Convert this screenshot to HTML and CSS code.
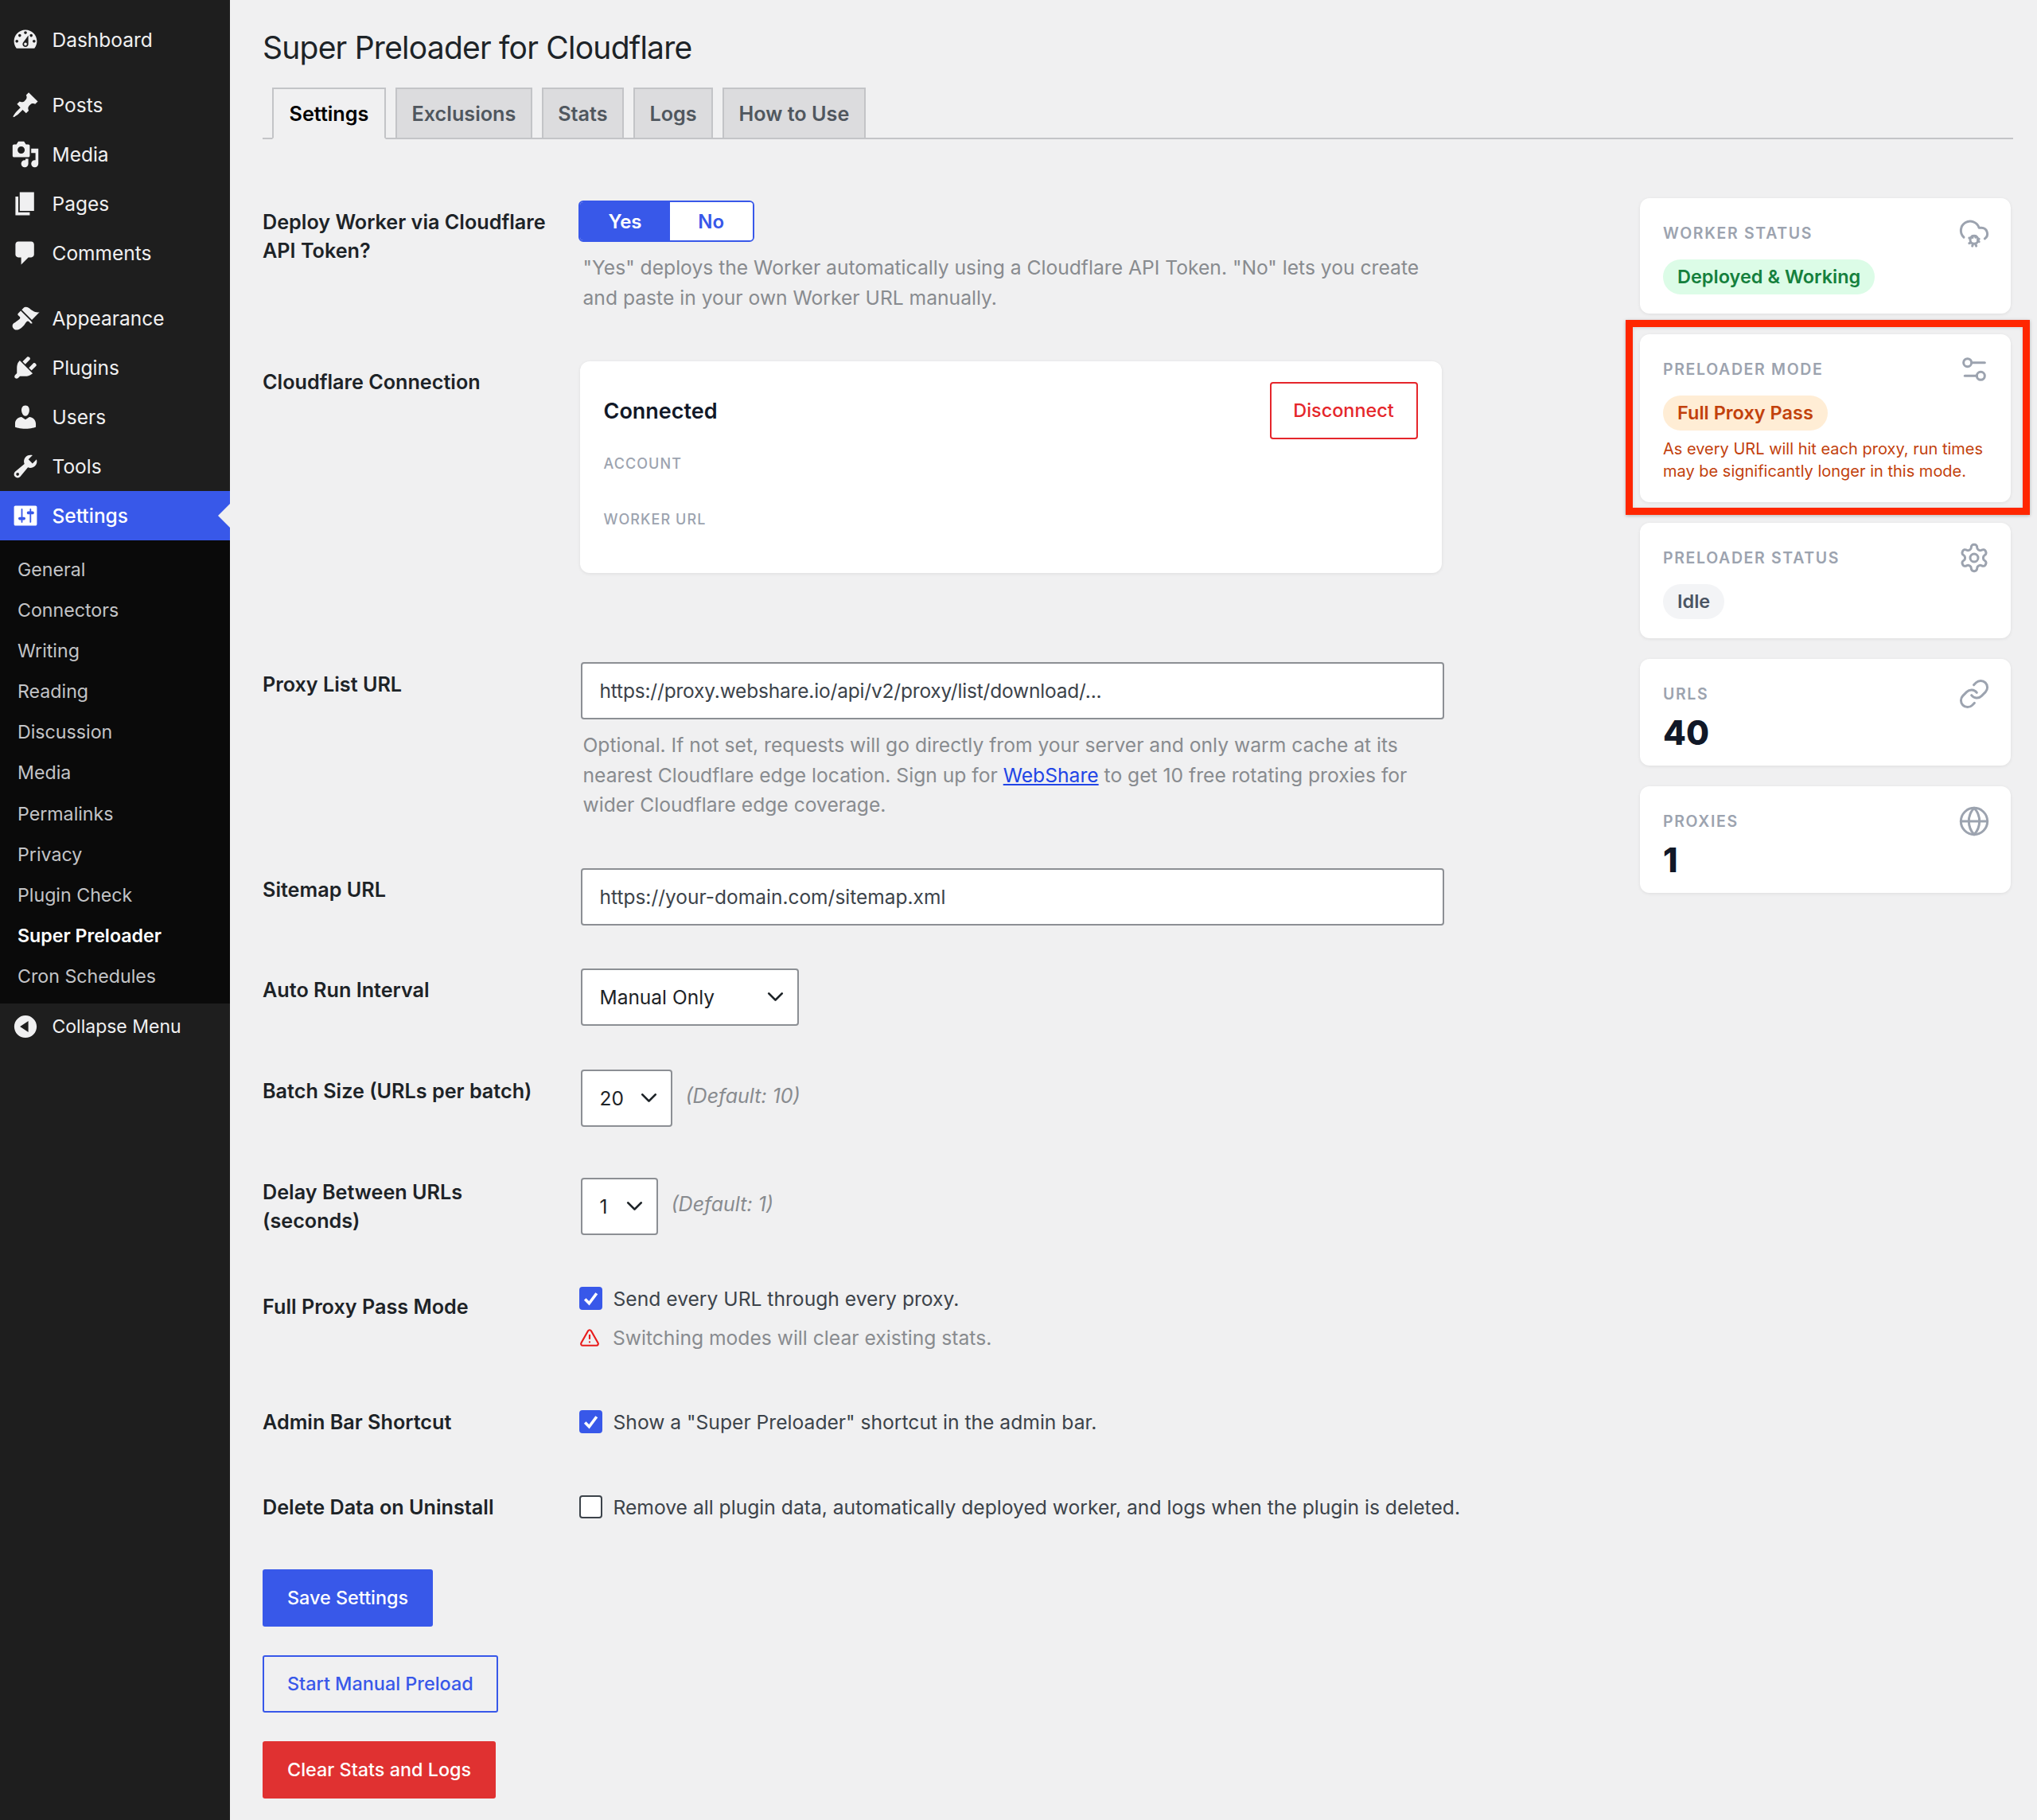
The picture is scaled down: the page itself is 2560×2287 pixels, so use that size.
FILE: index.html
```html
<!DOCTYPE html>
<html lang="en">
<head>
  <meta charset="UTF-8">
  <title>Super Preloader for Cloudflare</title>
  <link rel="stylesheet" href="styles.css">
</head>
<body>
  <div class="admin-menu">
    <ul class="menu-group">
      <li class="menu-item"><svg class="menu-icon" viewBox="0 0 20 20"><path fill-rule="evenodd" d="M3.76 16h12.48c1.1-1.37 1.76-3.11 1.76-5 0-4.42-3.58-8-8-8s-8 3.58-8 8c0 1.89.66 3.63 1.76 5zM10 4c.55 0 1 .45 1 1s-.45 1-1 1-1-.45-1-1 .45-1 1-1zM6 6c.55 0 1 .45 1 1s-.45 1-1 1-1-.45-1-1 .45-1 1-1zm8 0c.55 0 1 .45 1 1s-.45 1-1 1-1-.45-1-1 .45-1 1-1zm-5.37 5.55L12 7v6c0 1.1-.9 2-2 2s-2-.9-2-2c0-.57.24-1.08.63-1.45zM4 10c.55 0 1 .45 1 1s-.45 1-1 1-1-.45-1-1 .45-1 1-1zm12 0c.55 0 1 .45 1 1s-.45 1-1 1-1-.45-1-1 .45-1 1-1zm-5 3c0-.55-.45-1-1-1s-1 .45-1 1 .45 1 1 1 1-.45 1-1z"/></svg>Dashboard</li>
    </ul>
    <ul class="menu-group">
      <li class="menu-item"><svg class="menu-icon" viewBox="0 0 20 20"><path d="M10.44 3.02l1.82-1.82 6.36 6.35-1.83 1.82c-1.05-.68-2.48-.57-3.41.36l-.75.75c-.92.93-1.04 2.35-.35 3.41l-1.83 1.82-2.41-2.41-2.8 2.79c-.42.42-3.38 2.71-3.8 2.29s1.86-3.39 2.28-3.81l2.79-2.79L4.1 9.36l1.83-1.82c1.05.69 2.48.57 3.4-.36l.75-.75c.93-.92 1.05-2.35.36-3.41z"/></svg>Posts</li>
      <li class="menu-item"><svg class="menu-icon" viewBox="0 0 20 20"><path fill-rule="evenodd" d="M13 11V4c0-.55-.45-1-1-1h-1.67L9 1H5L3.67 3H2c-.55 0-1 .45-1 1v7c0 .55.45 1 1 1h10c.55 0 1-.45 1-1zM7 4.5c1.38 0 2.5 1.12 2.5 2.5S8.38 9.5 7 9.5 4.5 8.38 4.5 7 5.62 4.5 7 4.5zM14 6h5v10.5c0 1.38-1.12 2.5-2.5 2.5S14 17.88 14 16.5s1.12-2.5 2.5-2.5c.17 0 .34.02.5.05V9h-3V6zm-4 8.05V13h2v3.5c0 1.38-1.12 2.5-2.5 2.5S7 17.88 7 16.5 8.12 14 9.5 14c.17 0 .34.02.5.05z"/></svg>Media</li>
      <li class="menu-item"><svg class="menu-icon" viewBox="0 0 20 20"><path d="M6 15V2h10v13H6zm-1 1h8v2H3V5h2v11z"/></svg>Pages</li>
      <li class="menu-item"><svg class="menu-icon" viewBox="0 0 20 20"><path d="M5 2h9c1.1 0 2 .9 2 2v7c0 1.1-.9 2-2 2h-2l-5 5v-5H5c-1.1 0-2-.9-2-2V4c0-1.1.9-2 2-2z"/></svg>Comments</li>
    </ul>
    <ul class="menu-group">
      <li class="menu-item"><svg class="menu-icon" viewBox="0 0 20 20"><path d="M14.48 11.06L7.41 3.99l1.5-1.5c.5-.56 2.3-.47 3.51.32 1.21.8 1.43 1.28 2.91 2.1 1.18.64 2.45 1.26 4.45.85zm-.71.71L6.7 4.7 4.93 6.47c-.39.39-.39 1.02 0 1.41l1.06 1.06c.39.39.39 1.03 0 1.42-.6.6-1.43 1.11-2.21 1.69-.35.26-.7.53-1.01.84C1.43 13.23.76 14.4.93 15.7c.09.67.53 1.37 1.27 1.93.94.71 1.94.54 3.21.08 1.27-.47 2.4-1.62 3.02-2.25.33-.33.61-.68.87-1.02.54-.78 1.05-1.57 1.65-2.17.39-.39 1.03-.39 1.42 0l1.05 1.06c.39.39 1.03.39 1.42 0z"/></svg>Appearance</li>
      <li class="menu-item"><svg class="menu-icon" viewBox="0 0 20 20"><path d="M13.11 4.36L9.87 7.6 8 5.73l3.24-3.24c.35-.34 1.05-.2 1.56.32.52.51.66 1.21.31 1.55zm-8 1.77l.91-1.12 9.01 9.01-1.19.84c-.71.71-2.63 1.16-3.82 1.16H6.14L4.9 17.26c-.59.59-1.54.59-2.12 0-.59-.58-.59-1.53 0-2.12l1.24-1.24v-3.88c0-1.13.4-3.19 1.09-3.89zm7.26 3.97l3.24-3.24c.34-.35 1.04-.21 1.55.31.52.51.66 1.21.31 1.55l-3.24 3.25z"/></svg>Plugins</li>
      <li class="menu-item"><svg class="menu-icon" viewBox="0 0 20 20"><path d="M10 9.25c-2.27 0-2.73-3.44-2.73-3.44C7 4.02 7.82 2 9.97 2c2.16 0 2.98 2.02 2.71 3.81 0 0-.41 3.44-2.68 3.44zm0 2.57L12.72 10c2.39 0 4.52 2.33 4.52 4.53v2.49s-3.65 1.13-7.24 1.13c-3.65 0-7.24-1.13-7.24-1.13v-2.49c0-2.25 1.94-4.48 4.47-4.48z"/></svg>Users</li>
      <li class="menu-item"><svg class="menu-icon" viewBox="0 0 20 20"><path fill-rule="evenodd" d="M16.68 9.77c-1.34 1.34-3.3 1.67-4.95.99l-5.41 6.52c-.99.99-2.59.99-3.58 0s-.99-2.59 0-3.57l6.52-5.42c-.68-1.65-.35-3.61.99-4.95 1.28-1.28 3.12-1.62 4.72-1.06l-2.89 2.89 2.82 2.82 2.86-2.87c.53 1.58.18 3.39-1.08 4.65zM3.81 16.21c.4.39 1.04.39 1.43 0 .4-.4.4-1.04 0-1.43-.39-.4-1.03-.4-1.43 0-.39.39-.39 1.03 0 1.43z"/></svg>Tools</li>
      <li class="menu-item current"><svg class="menu-icon" viewBox="0 0 20 20"><path fill-rule="evenodd" d="M18 16V4c0-.55-.45-1-1-1H3c-.55 0-1 .45-1 1v12c0 .55.45 1 1 1h14c.55 0 1-.45 1-1zM8 11h1c.55 0 1 .45 1 1s-.45 1-1 1H8v1.5c0 .28-.22.5-.5.5s-.5-.22-.5-.5V13H6c-.55 0-1-.45-1-1s.45-1 1-1h1V5.5c0-.28.22-.5.5-.5s.5.22.5.5V11zm5-2h-1c-.55 0-1-.45-1-1s.45-1 1-1h1V5.5c0-.28.22-.5.5-.5s.5.22.5.5V7h1c.55 0 1 .45 1 1s-.45 1-1 1h-1v5.5c0 .28-.22.5-.5.5s-.5-.22-.5-.5V9z"/></svg>Settings</li>
    </ul>
    <ul class="submenu">
      <li>General</li>
      <li>Connectors</li>
      <li>Writing</li>
      <li>Reading</li>
      <li>Discussion</li>
      <li>Media</li>
      <li>Permalinks</li>
      <li>Privacy</li>
      <li>Plugin Check</li>
      <li class="active">Super Preloader</li>
      <li>Cron Schedules</li>
    </ul>
    <div class="menu-item collapse"><svg class="menu-icon" viewBox="0 0 20 20"><path fill-rule="evenodd" d="M10 2.16c4.33 0 7.84 3.51 7.84 7.84s-3.51 7.84-7.84 7.84S2.16 14.33 2.16 10 5.71 2.16 10 2.16zm2 11.72V6.12L6.18 9.97z"/></svg>Collapse Menu</div>
  </div>

  <div class="wrap">
    <h1 class="page-title">Super Preloader for Cloudflare</h1>
    <div class="tabs">
      <a class="tab active">Settings</a>
      <a class="tab">Exclusions</a>
      <a class="tab">Stats</a>
      <a class="tab">Logs</a>
      <a class="tab">How to Use</a>
    </div>

    <div class="columns">
      <div class="settings">
        <div class="form-row row-deploy">
          <div class="row-label label-deploy">Deploy Worker via Cloudflare API Token?</div>
          <div>
            <div class="toggle"><span class="toggle-yes">Yes</span><span class="toggle-no">No</span></div>
            <p class="hint hint-toggle">"Yes" deploys the Worker automatically using a Cloudflare API Token. "No" lets you create<br>and paste in your own Worker URL manually.</p>
          </div>
        </div>

        <div class="form-row row-connection">
          <div class="row-label label-card">Cloudflare Connection</div>
          <div class="connection-card">
            <div class="connection-main">
              <div class="connection-title">Connected</div>
              <div class="connection-field">ACCOUNT</div>
              <div class="connection-field">WORKER URL</div>
            </div>
            <a class="btn-disconnect">Disconnect</a>
          </div>
        </div>

        <div class="form-row row-proxy">
          <div class="row-label label-input">Proxy List URL</div>
          <div>
            <input class="text-input input-proxy" type="text" value="https://proxy.webshare.io/api/v2/proxy/list/download/...">
            <p class="hint hint-input">Optional. If not set, requests will go directly from your server and only warm cache at its<br>nearest Cloudflare edge location. Sign up for <a class="link">WebShare</a> to get 10 free rotating proxies for<br>wider Cloudflare edge coverage.</p>
          </div>
        </div>

        <div class="form-row row-sitemap">
          <div class="row-label label-input">Sitemap URL</div>
          <input class="text-input" type="text" value="https://your-domain.com/sitemap.xml">
        </div>

        <div class="form-row row-interval">
          <div class="row-label label-input">Auto Run Interval</div>
          <div class="select select-interval">Manual Only<svg class="chevron" viewBox="0 0 24 24"><path d="m6 9 6 6 6-6"/></svg></div>
        </div>

        <div class="form-row row-batch">
          <div class="row-label label-input">Batch Size (URLs per batch)</div>
          <div class="inline-field">
            <div class="select select-batch">20<svg class="chevron" viewBox="0 0 24 24"><path d="m6 9 6 6 6-6"/></svg></div>
            <em class="default-note">(Default: 10)</em>
          </div>
        </div>

        <div class="form-row row-delay">
          <div class="row-label label-delay">Delay Between URLs (seconds)</div>
          <div class="inline-field">
            <div class="select select-delay">1<svg class="chevron" viewBox="0 0 24 24"><path d="m6 9 6 6 6-6"/></svg></div>
            <em class="default-note">(Default: 1)</em>
          </div>
        </div>

        <div class="form-row row-fullpass">
          <div class="row-label label-check">Full Proxy Pass Mode</div>
          <div>
            <label class="check-line"><span class="checkbox checked"><svg viewBox="0 0 24 24"><path d="m5 13 5 5 9-12"/></svg></span>Send every URL through every proxy.</label>
            <div class="warn-line"><svg class="warn-icon" viewBox="0 0 24 24"><path d="m21.73 18-8-14a2 2 0 0 0-3.48 0l-8 14A2 2 0 0 0 4 21h16a2 2 0 0 0 1.73-3"/><path d="M12 9v4"/><path d="M12 17h.01"/></svg>Switching modes will clear existing stats.</div>
          </div>
        </div>

        <div class="form-row row-adminbar">
          <div class="row-label label-plain">Admin Bar Shortcut</div>
          <label class="check-line"><span class="checkbox checked"><svg viewBox="0 0 24 24"><path d="m5 13 5 5 9-12"/></svg></span>Show a "Super Preloader" shortcut in the admin bar.</label>
        </div>

        <div class="form-row row-uninstall">
          <div class="row-label label-plain">Delete Data on Uninstall</div>
          <label class="check-line nowrap"><span class="checkbox"></span>Remove all plugin data, automatically deployed worker, and logs when the plugin is deleted.</label>
        </div>

        <div class="actions">
          <a class="btn btn-primary">Save Settings</a>
          <a class="btn btn-outline">Start Manual Preload</a>
          <a class="btn btn-danger">Clear Stats and Logs</a>
        </div>
      </div>

      <aside class="status-cards">
        <div class="stat-card">
          <div class="stat-head">
            <span class="stat-label">WORKER STATUS</span>
            <svg class="stat-icon" viewBox="0 0 24 24"><path d="M4.2 15.1A7 7 0 1 1 15.71 8h1.79a4.5 4.5 0 0 1 2.5 8.2"/><circle cx="12" cy="17" r="3"/><path d="m15.7 18.4-.9-.3"/><path d="m9.2 15.9-.9-.3"/><path d="m10.6 21.7.3-.9"/><path d="m13.1 15.2.3-.9"/><path d="m13.6 21.7-.4-1"/><path d="m10.8 15.3-.4-1"/><path d="m8.3 19.6 1-.4"/><path d="m14.7 16.8 1-.4"/></svg>
          </div>
          <span class="badge badge-green">Deployed &amp; Working</span>
        </div>

        <div class="stat-card highlighted">
          <div class="highlight-box"></div>
          <div class="stat-head">
            <span class="stat-label">PRELOADER MODE</span>
            <svg class="stat-icon" viewBox="0 0 24 24"><path d="M20 7h-9"/><path d="M14 17H5"/><circle cx="17" cy="17" r="3"/><circle cx="7" cy="7" r="3"/></svg>
          </div>
          <span class="badge badge-orange">Full Proxy Pass</span>
          <p class="stat-note">As every URL will hit each proxy, run times may be significantly longer in this mode.</p>
        </div>

        <div class="stat-card">
          <div class="stat-head">
            <span class="stat-label">PRELOADER STATUS</span>
            <svg class="stat-icon" viewBox="0 0 24 24"><path d="M12.22 2h-.44a2 2 0 0 0-2 2v.18a2 2 0 0 1-1 1.73l-.43.25a2 2 0 0 1-2 0l-.15-.08a2 2 0 0 0-2.73.73l-.22.38a2 2 0 0 0 .73 2.73l.15.1a2 2 0 0 1 1 1.72v.51a2 2 0 0 1-1 1.74l-.15.09a2 2 0 0 0-.73 2.73l.22.38a2 2 0 0 0 2.73.73l.15-.08a2 2 0 0 1 2 0l.43.25a2 2 0 0 1 1 1.73V20a2 2 0 0 0 2 2h.44a2 2 0 0 0 2-2v-.18a2 2 0 0 1 1-1.73l.43-.25a2 2 0 0 1 2 0l.15.08a2 2 0 0 0 2.73-.73l.22-.39a2 2 0 0 0-.73-2.73l-.15-.08a2 2 0 0 1-1-1.74v-.5a2 2 0 0 1 1-1.74l.15-.09a2 2 0 0 0 .73-2.73l-.22-.38a2 2 0 0 0-2.73-.73l-.15.08a2 2 0 0 1-2 0l-.43-.25a2 2 0 0 1-1-1.73V4a2 2 0 0 0-2-2z"/><circle cx="12" cy="12" r="3"/></svg>
          </div>
          <span class="badge badge-gray">Idle</span>
        </div>

        <div class="stat-card">
          <div class="stat-head">
            <span class="stat-label">URLS</span>
            <svg class="stat-icon" viewBox="0 0 24 24"><path d="M10 13a5 5 0 0 0 7.54.54l3-3a5 5 0 0 0-7.07-7.07l-1.72 1.71"/><path d="M14 11a5 5 0 0 0-7.54-.54l-3 3a5 5 0 0 0 7.07 7.07l1.71-1.71"/></svg>
          </div>
          <div class="stat-number">40</div>
        </div>

        <div class="stat-card">
          <div class="stat-head">
            <span class="stat-label">PROXIES</span>
            <svg class="stat-icon" viewBox="0 0 24 24"><circle cx="12" cy="12" r="10"/><path d="M12 2a14.5 14.5 0 0 0 0 20 14.5 14.5 0 0 0 0-20"/><path d="M2 12h20"/></svg>
          </div>
          <div class="stat-number">1</div>
        </div>
      </aside>
    </div>
  </div>
</body>
</html>
```

FILE: styles.css
```css
* {
  box-sizing: border-box;
}

html, body {
  margin: 0;
  padding: 0;
}

body {
  display: flex;
  min-height: 2287px;
  font-family: "Inter", "Liberation Sans", sans-serif;
  background-color: #f0f0f1;
  color: #1d2327;
}

/* admin menu */
.admin-menu {
  width: 289px;
  flex-shrink: 0;
  padding-top: 19px;
  background-color: #1e1e1e;
  color: #f0f0f1;
}

.menu-group {
  list-style: none;
  margin: 0 0 20px;
  padding: 0;
}

.menu-group:nth-child(3) {
  margin-bottom: 0;
}

.menu-item {
  position: relative;
  display: flex;
  align-items: center;
  gap: 15.5px;
  height: 62px;
  padding-left: 14px;
  font-size: 24.5px;
}

.menu-icon {
  width: 36px;
  height: 36px;
  fill: #f0f0f1;
}

.menu-item.current {
  background-color: #3858e9;
  color: #fff;
  font-weight: 500;
}

.menu-item.current .menu-icon {
  fill: #fff;
}

.menu-item.current::after {
  content: "";
  position: absolute;
  right: 0;
  top: 50%;
  margin-top: -15px;
  border: 15px solid transparent;
  border-right-color: #f0f0f1;
  border-left-width: 0;
}

.submenu {
  list-style: none;
  margin: 0;
  padding: 11.5px 0 7.5px;
  background-color: #0a0a0a;
  color: #c3c4c7;
  font-size: 23.2px;
}

.submenu li {
  height: 51.2px;
  line-height: 51.2px;
  padding-left: 22px;
}

.submenu .active {
  color: #fff;
  font-weight: 600;
}

.collapse {
  height: 58px;
  font-size: 23px;
}

/* page header */
.wrap {
  flex: 1;
  min-width: 0;
  padding: 0 30px 0 41px;
}

.page-title {
  margin: 0;
  padding-top: 34px;
  height: 110px;
  font-size: 39px;
  letter-spacing: -0.77px;
  line-height: 52px;
  font-weight: 400;
  color: #1d2327;
}

.tabs {
  display: flex;
  gap: 12.5px;
  height: 65px;
  padding-left: 12px;
  border-bottom: 2px solid #c3c4c7;
}

.tab {
  height: 65px;
  padding: 0 18.2px;
  line-height: 62px;
  font-size: 25.2px;
  font-weight: 600;
  color: #50575e;
  background-color: #dcdcde;
  border: 2px solid #c3c4c7;
}

.tab.active {
  padding: 0 19.5px;
  color: #000;
  background-color: #f0f0f1;
  border-bottom-color: #f0f0f1;
}

/* layout of the settings form and the status column */
.columns {
  display: flex;
  justify-content: space-between;
  padding-top: 77px;
}

.settings {
  width: 1500px;
}

.form-row {
  display: grid;
  grid-template-columns: 399.5px 1085px;
}

.row-label {
  font-size: 25.2px;
  font-weight: 600;
  line-height: 36px;
  color: #1d2327;
  padding-right: 30px;
}

.label-deploy {
  padding-top: 9px;
}

.label-card {
  padding-top: 8px;
}

.label-input {
  padding-top: 9.5px;
}

.label-delay {
  padding-top: 0;
}

.label-check {
  padding-top: 7px;
}

.label-plain {
  padding-top: 0;
}

.row-deploy {
  margin-bottom: 61px;
}

.row-connection {
  margin-bottom: 112px;
}

.row-proxy {
  margin-bottom: 60px;
}

.row-sitemap {
  margin-bottom: 54px;
}

.row-interval {
  margin-bottom: 55px;
}

.row-batch {
  margin-bottom: 64px;
}

.row-delay {
  margin-bottom: 65px;
}

.row-fullpass {
  margin-bottom: 72.5px;
}

.row-adminbar {
  margin-bottom: 71px;
}

.row-uninstall {
  margin-bottom: 60px;
}

/* yes / no toggle */
.toggle {
  display: inline-flex;
  height: 52px;
  margin-left: -2.5px;
  border: 2px solid #3858e9;
  border-radius: 6px;
  overflow: hidden;
  font-size: 24px;
  font-weight: 600;
  line-height: 49.5px;
  text-align: center;
}

.toggle-yes {
  width: 113px;
  background-color: #3858e9;
  color: #fff;
}

.toggle-no {
  width: 103.5px;
  background-color: #fff;
  color: #3858e9;
}

.hint {
  margin: 0;
  padding-left: 3px;
  font-size: 24.65px;
  line-height: 37.5px;
  color: #888b8f;
}

.hint-toggle {
  margin-top: 14px;
}

.hint-input {
  margin-top: 14px;
}

.link {
  color: #2145e6;
  text-decoration: underline;
}

/* cloudflare connection card */
.connection-card {
  display: flex;
  justify-content: space-between;
  align-items: flex-start;
  width: 1083px;
  height: 266px;
  margin-left: -1px;
  padding: 26px 30px;
  background-color: #fff;
  border-radius: 12px;
  box-shadow: 0 1px 4px rgba(0, 0, 0, 0.08);
}

.connection-main {
  padding-top: 15px;
}

.connection-title {
  font-size: 27px;
  font-weight: 600;
  line-height: 44px;
  margin-bottom: 33px;
  color: #111827;
}

.connection-field {
  height: 70px;
  font-size: 18px;
  font-weight: 500;
  letter-spacing: 0.06em;
  color: #9ca3af;
}

.btn-disconnect {
  width: 186px;
  height: 72px;
  line-height: 68px;
  text-align: center;
  font-size: 23.4px;
  font-weight: 500;
  color: #e5262b;
  border: 2px solid #e5262b;
  border-radius: 4px;
}

/* inputs and selects */
.text-input {
  display: block;
  width: 1085px;
  height: 72px;
  padding: 0 22px;
  font-family: inherit;
  font-size: 24.5px;
  color: #3c434a;
  background-color: #fff;
  border: 2px solid #8c8f94;
  border-radius: 4px;
}

.input-proxy {
  letter-spacing: -0.18px;
}

.select {
  display: flex;
  align-items: center;
  justify-content: space-between;
  height: 72px;
  padding: 0 11px 0 22px;
  font-size: 24.5px;
  color: #1d2327;
  background-color: #fff;
  border: 2px solid #8c8f94;
  border-radius: 4px;
}

.select-interval {
  width: 274px;
}

.select-batch {
  width: 115px;
}

.select-delay {
  width: 97px;
}

.chevron {
  width: 33px;
  height: 33px;
  flex-shrink: 0;
  fill: none;
  stroke: #1d2327;
  stroke-width: 2;
  stroke-linecap: round;
  stroke-linejoin: round;
}

.inline-field {
  display: flex;
  align-items: center;
  gap: 17px;
}

.default-note {
  font-size: 25px;
  color: #888b8f;
  margin-top: -6px;
}

/* checkboxes */
.check-line {
  display: flex;
  align-items: center;
  gap: 14px;
  font-size: 24.65px;
  line-height: 30px;
  color: #3c434a;
  margin-left: -2px;
}

.nowrap {
  white-space: nowrap;
}

.checkbox {
  width: 29px;
  height: 29px;
  flex-shrink: 0;
  background-color: #fff;
  border: 2px solid #3c434a;
  border-radius: 4px;
}

.checkbox.checked {
  background-color: #3858e9;
  border-color: #3858e9;
}

.checkbox svg {
  display: block;
  width: 25px;
  height: 25px;
  fill: none;
  stroke: #fff;
  stroke-width: 3.5;
}

.warn-line {
  display: flex;
  align-items: center;
  gap: 16px;
  margin-top: 19.5px;
  margin-left: -1.5px;
  font-size: 24.65px;
  line-height: 30px;
  color: #888b8f;
}

.warn-icon {
  width: 26px;
  height: 26px;
  flex-shrink: 0;
  fill: none;
  stroke: #e81c1c;
  stroke-width: 2;
  stroke-linecap: round;
  stroke-linejoin: round;
}

/* buttons */
.actions {
  display: flex;
  flex-direction: column;
  align-items: flex-start;
  gap: 36px;
}

.btn {
  height: 72px;
  padding: 0 31px;
  line-height: 72px;
  font-size: 23.4px;
  font-weight: 500;
  border-radius: 3px;
}

.btn-primary {
  background-color: #3858e9;
  color: #fff;
}

.btn-outline {
  line-height: 68px;
  color: #3858e9;
  border: 2px solid #3858e9;
  padding: 0 29px;
}

.btn-danger {
  background-color: #e03131;
  color: #fff;
}

/* status cards */
.status-cards {
  width: 466px;
  margin-right: 3px;
  margin-top: -3px;
  display: flex;
  flex-direction: column;
  gap: 26px;
}

.stat-card {
  position: relative;
  padding: 24px 26px 24px 29px;
  background-color: #fff;
  border-radius: 12px;
  box-shadow: 0 1px 4px rgba(0, 0, 0, 0.08);
}

.stat-head {
  display: flex;
  justify-content: space-between;
  align-items: center;
  height: 40px;
  margin-bottom: 13px;
}

.stat-label {
  font-size: 19.5px;
  font-weight: 600;
  letter-spacing: 1.65px;
  color: #9ca3af;
}

.stat-icon {
  width: 40px;
  height: 40px;
  fill: none;
  stroke: #9ca3af;
  stroke-width: 1.8;
  stroke-linecap: round;
  stroke-linejoin: round;
}

.badge {
  display: block;
  width: fit-content;
  height: 44px;
  padding: 0 18px;
  line-height: 44px;
  font-size: 23.5px;
  font-weight: 600;
  border-radius: 22px;
}

.badge-green {
  background-color: #dcfce7;
  color: #15803d;
}

.badge-orange {
  background-color: #ffedd5;
  color: #c2410c;
}

.badge-gray {
  background-color: #f3f4f6;
  color: #4b5563;
}

.stat-note {
  margin: 10px -10px 1px 0;
  font-size: 20px;
  line-height: 27.5px;
  color: #c2410c;
}

.stat-number {
  margin-top: -5px;
  height: 38px;
  font-size: 42px;
  font-weight: 800;
  line-height: 42px;
  color: #111827;
}

/* red annotation around the mode card */
.highlight-box {
  position: absolute;
  top: -18px;
  left: -18px;
  right: -24px;
  bottom: -16px;
  border: 9px solid #ff2600;
  box-shadow: 0 1px 4px rgba(0, 0, 0, 0.25), inset 0 1px 4px rgba(0, 0, 0, 0.12);
  pointer-events: none;
}
```
